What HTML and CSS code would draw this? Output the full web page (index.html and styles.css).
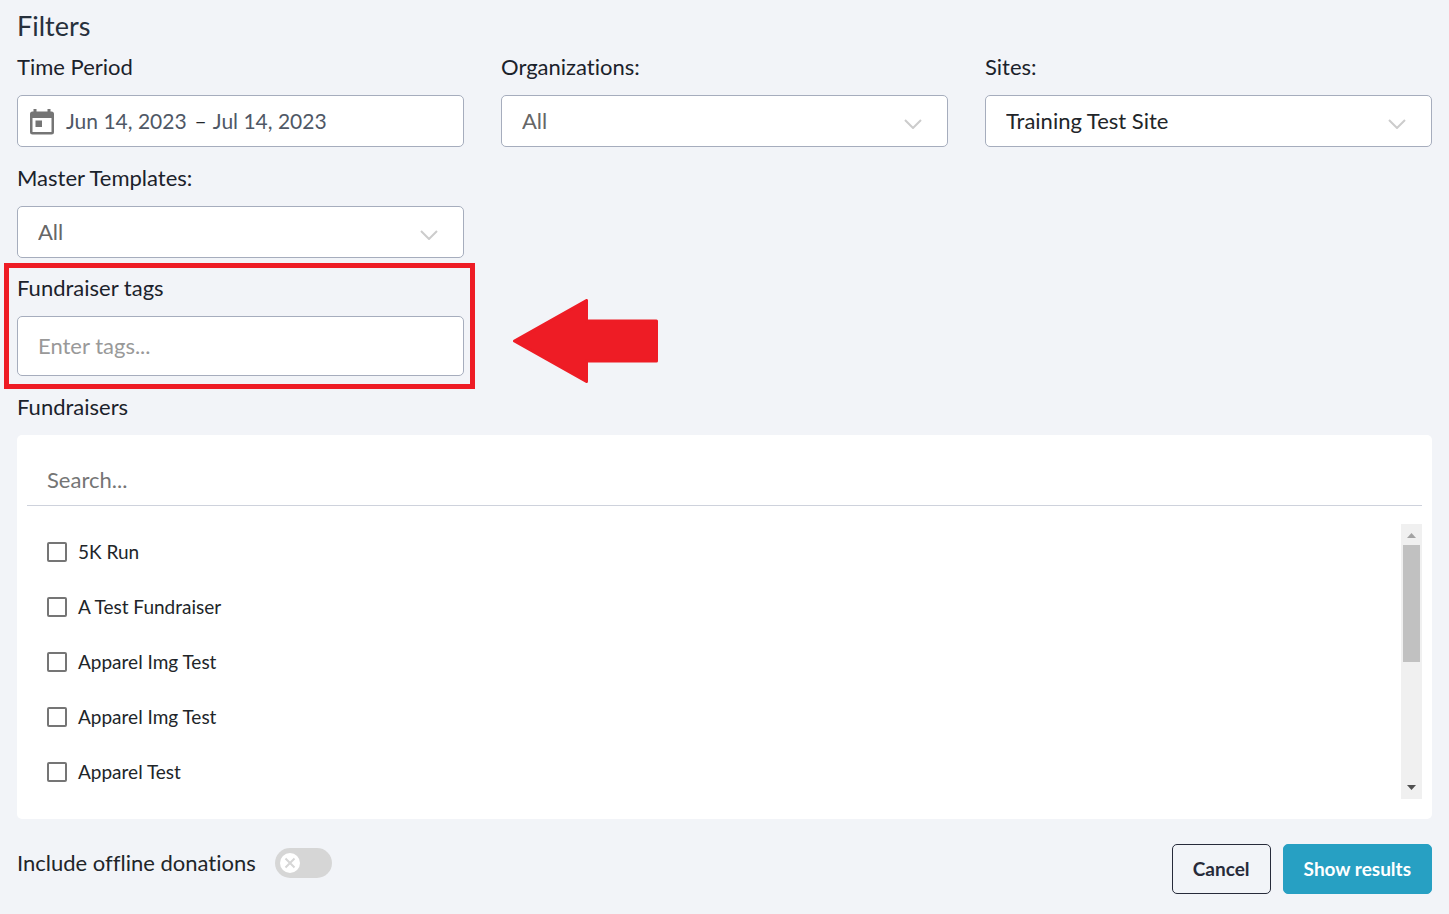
FILE: index.html
```html
<!DOCTYPE html>
<html lang="en">
<head>
<meta charset="utf-8">
<title>Filters</title>
<meta name="viewport" content="width=device-width, initial-scale=1">
<link rel="stylesheet" href="styles.css">
</head>
<body>
<form class="filters">
  <h1 class="title">Filters</h1>

  <div class="grid">
    <div class="group">
      <label class="label" for="period">Time Period</label>
      <button class="field date" id="period" type="button">
        <svg class="date-icon" viewBox="0 0 24 26" aria-hidden="true">
          <path fill="#757575" fill-rule="evenodd" d="M3.500 0h3v2.500h11V0h3v2.500h1a2.500 2.500 0 0 1 2.500 2.500v18a2.500 2.500 0 0 1-2.500 2.500h-19A2.500 2.500 0 0 1 0 23V5a2.500 2.500 0 0 1 2.500-2.500h1zM2.500 9v14h19V9zM5.500 11.500h6.500v6.500H5.500z"/>
        </svg>
        <span class="dates"><span>Jun 14, 2023</span><span class="dash">–</span><span>Jul 14, 2023</span></span>
      </button>
    </div>
    <div class="group">
      <label class="label" for="orgs">Organizations:</label>
      <div class="select">
        <select class="field muted" id="orgs"><option>All</option></select>
        <svg class="chevron" viewBox="0 0 18 10" aria-hidden="true"><path d="M1 1l8 8 8-8"/></svg>
      </div>
    </div>
    <div class="group">
      <label class="label" for="sites">Sites:</label>
      <div class="select">
        <select class="field" id="sites"><option>Training Test Site</option></select>
        <svg class="chevron" viewBox="0 0 18 10" aria-hidden="true"><path d="M1 1l8 8 8-8"/></svg>
      </div>
    </div>
    <div class="group">
      <label class="label" for="templates">Master Templates:</label>
      <div class="select">
        <select class="field muted" id="templates"><option>All</option></select>
        <svg class="chevron" viewBox="0 0 18 10" aria-hidden="true"><path d="M1 1l8 8 8-8"/></svg>
      </div>
    </div>
  </div>

  <div class="grid tags-row">
    <div class="group highlighted">
      <label class="label" for="tags">Fundraiser tags</label>
      <input class="field tags" id="tags" type="text" placeholder="Enter tags...">
      <svg class="pointer" viewBox="0 0 145 84" aria-hidden="true">
        <path d="M1.500 42L73.500 1.500V22H143.500V62H73.500V82.500z"/>
      </svg>
    </div>
  </div>

  <section class="fundraisers">
    <label class="label" for="search">Fundraisers</label>
    <div class="panel">
      <input class="search" id="search" type="text" placeholder="Search...">
      <div class="list">
        <div class="options">
          <label class="option"><input class="check" type="checkbox">5K Run</label>
          <label class="option"><input class="check" type="checkbox">A Test Fundraiser</label>
          <label class="option"><input class="check" type="checkbox">Apparel Img Test</label>
          <label class="option"><input class="check" type="checkbox">Apparel Img Test</label>
          <label class="option"><input class="check" type="checkbox">Apparel Test</label>
        </div>
        <div class="scrollbar" aria-hidden="true">
          <svg class="scroll-arrow" viewBox="0 0 21 21"><path fill="#a3a3a3" d="M6 14l4.500-5 4.500 5z"/></svg>
          <div class="track"><div class="thumb"></div></div>
          <svg class="scroll-arrow" viewBox="0 0 21 21"><path fill="#505050" d="M6 7l4.500 5 4.500-5z"/></svg>
        </div>
      </div>
    </div>
  </section>

  <footer class="footer">
    <div class="offline">
      <label for="offline">Include offline donations</label>
      <span class="switch">
        <input class="toggle" id="offline" type="checkbox" role="switch">
        <svg class="cross" viewBox="0 0 20 20" aria-hidden="true"><circle cx="10" cy="10" r="10"/><path d="M5.500 5.500l9 9M14.500 5.500l-9 9"/></svg>
      </span>
    </div>
    <div class="actions">
      <button class="btn" type="button">Cancel</button>
      <button class="btn primary" type="submit">Show results</button>
    </div>
  </footer>
</form>
</body>
</html>
```
FILE: styles.css
```css
* {
  box-sizing: border-box;
}

body {
  margin: 0;
  background: #f2f4f8;
  color: #212529;
  font-family: Lato, "Liberation Sans", sans-serif;
  font-size: 22px;
  line-height: 30px;
  font-variant-ligatures: none;
}

input,
select,
button {
  margin: 0;
  color: inherit;
  font: inherit;
}

.filters {
  padding: 10px 17px 20px;
}

.title {
  margin: 0 0 10px;
  color: #27303c;
  font-size: 27px;
  font-weight: 400;
  line-height: 32px;
}

.grid {
  display: grid;
  grid-template-columns: repeat(3, minmax(0, 1fr));
  gap: 16px 37px;
}

.tags-row {
  margin-top: 15px;
}

.label {
  display: block;
  margin-bottom: 13px;
  color: #1b222b;
}

.field {
  display: block;
  width: 100%;
  height: 52px;
  padding: 0 20px;
  border: 1px solid #a6adbd;
  border-radius: 5px;
  background: #fff;
  appearance: none;
}

.field.muted {
  color: #666;
}

.field.tags {
  height: 60px;
  padding-bottom: 2px;
}

.field.tags::placeholder {
  color: #999;
}

.field.date {
  display: flex;
  align-items: center;
  gap: 12px;
  padding: 0 12px;
  color: #4f5866;
  font-size: 21px;
}

.date-icon {
  width: 24px;
  height: 26px;
  margin-top: 2px;
}

.dates {
  display: flex;
  gap: 6px;
}

.dash {
  padding-left: 2px;
  color: #212529;
}

.select {
  position: relative;
}

.chevron {
  position: absolute;
  top: 24px;
  right: 26px;
  width: 18px;
  height: 10px;
  fill: none;
  stroke: #ccc;
  stroke-width: 2;
  pointer-events: none;
}

.highlighted {
  position: relative;
}

.highlighted::after {
  content: "";
  position: absolute;
  inset: -10px -11px -13px -13px;
  border: 5px solid #ee1c25;
  pointer-events: none;
}

.pointer {
  position: absolute;
  top: 26px;
  left: calc(100% + 49px);
  width: 145px;
  height: 84px;
  fill: #ee1c25;
  stroke: #ee1c25;
  stroke-width: 3;
  stroke-linejoin: round;
}

.fundraisers {
  margin-top: 16px;
}

.panel {
  padding: 20px 10px;
  border-radius: 5px;
  background: #fff;
}

.search {
  display: block;
  width: 100%;
  height: 51px;
  padding: 0 20px 2px;
  border: 0;
  border-bottom: 1px solid #ced2dc;
  background: transparent;
}

.search::placeholder {
  color: #757575;
}

.list {
  display: flex;
  margin-top: 18px;
}

.options {
  flex: 1;
}

.option {
  display: flex;
  align-items: center;
  gap: 11px;
  height: 55px;
  padding-left: 20px;
  font-size: 19px;
}

.check {
  width: 20px;
  height: 20px;
  border: 2px solid #757575;
  border-radius: 2px;
  background: #fff;
  appearance: none;
}

.check:checked {
  background: #27a0c3;
}

.scrollbar {
  display: flex;
  flex-direction: column;
  width: 21px;
  background: #f0f0f0;
}

.scroll-arrow {
  width: 21px;
  height: 21px;
}

.track {
  flex: 1;
  padding: 0 2px;
}

.thumb {
  height: 50%;
  background: #c1c1c1;
}

.footer {
  display: flex;
  justify-content: space-between;
  align-items: flex-start;
  margin-top: 25px;
}

.offline {
  display: flex;
  align-items: center;
  gap: 19px;
  padding-top: 4px;
}

.switch {
  position: relative;
  display: flex;
}

.toggle {
  width: 57px;
  height: 30px;
  border-radius: 15px;
  background: #d6d6d6;
  appearance: none;
}

.cross {
  position: absolute;
  top: 5px;
  left: 5px;
  width: 20px;
  height: 20px;
  fill: #fff;
  stroke-width: 2;
  pointer-events: none;
}

.cross path {
  stroke: #d6d6d6;
}

.actions {
  display: flex;
  gap: 12px;
}

.btn {
  height: 50px;
  padding: 0 20px;
  border: 1px solid #272b3a;
  border-radius: 5px;
  background: transparent;
  color: #272b3a;
  font-size: 19px;
  font-weight: 700;
}

.btn.primary {
  border-color: #27a0c3;
  background: #27a0c3;
  color: #fff;
}
```
